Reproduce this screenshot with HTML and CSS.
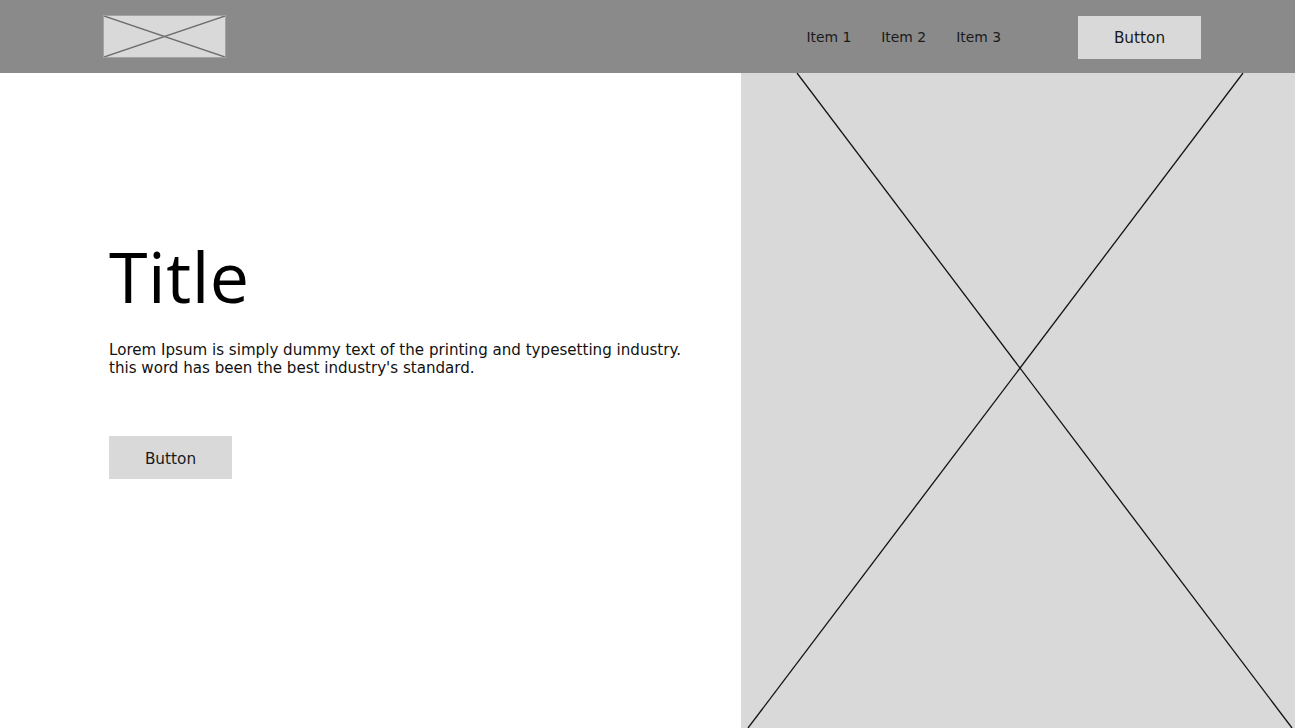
FILE: index.html
```html
<!DOCTYPE html>
<html lang="en">
<head>
<meta charset="utf-8">
<title>Landing</title>
<link rel="stylesheet" href="styles.css">
</head>
<body>
<header class="header">
  <div class="logo">
    <svg class="ph-svg" viewBox="0 0 123 43" preserveAspectRatio="none">
      <line x1="0" y1="0" x2="123" y2="43" />
      <line x1="123" y1="0" x2="0" y2="43" />
    </svg>
  </div>
  <nav class="nav">
    <a class="nav-item">Item 1</a>
    <a class="nav-item">Item 2</a>
    <a class="nav-item">Item 3</a>
  </nav>
  <button class="btn btn-header">Button</button>
</header>
<main class="main">
  <section class="hero">
    <h1 class="title">Title</h1>
    <p class="lead">Lorem Ipsum is simply dummy text of the printing and typesetting industry.<br>this word has been the best industry's standard.</p>
    <button class="btn btn-hero">Button</button>
  </section>
  <div class="media">
    <svg class="media-svg" viewBox="0 0 554 655" preserveAspectRatio="none">
      <line x1="56" y1="0" x2="551" y2="655" />
      <line x1="502" y1="0" x2="7" y2="655" />
    </svg>
  </div>
</main>
</body>
</html>
```
FILE: styles.css
```css
* { box-sizing: border-box; }
html, body { margin: 0; padding: 0; }
body {
  width: 1295px;
  height: 728px;
  overflow: hidden;
  background: #ffffff;
  font-family: "DejaVu Sans", "Open Sans", sans-serif;
  color: #111;
  display: flex;
  flex-direction: column;
}
.header {
  height: 73px;
  flex: none;
  background: #8a8a8a;
  display: flex;
  align-items: center;
  padding: 0 94px 0 103px;
}
.logo {
  width: 123px;
  height: 43px;
  background: #d9d9d9;
  border: 1px solid #a3a3a3;
}
.ph-svg { display: block; width: 100%; height: 100%; }
.ph-svg line { stroke: #6e6e6e; stroke-width: 1.5; }
.nav {
  margin-left: auto;
  display: flex;
  gap: 30px;
  margin-right: 77px;
}
.nav-item {
  font-size: 13.9px;
  color: #1a1a1a;
}
.btn {
  border: none;
  background: #d9d9d9;
  font-family: inherit;
  color: #1a1a1a;
  width: 123px;
  height: 43px;
  padding: 2px 0 0;
  font-size: 15.3px;
}
.btn-header { margin-top: 1px; }
.main {
  flex: 1;
  display: grid;
  grid-template-columns: 741px 1fr;
}
.hero {
  padding: 163px 0 0 109px;
}
.title {
  margin: 0;
  font-family: "Open Sans", sans-serif;
  font-weight: 400;
  font-size: 70px;
  line-height: 80px;
  letter-spacing: 0.5px;
  color: #000;
}
.lead {
  margin: 25px 0 0;
  font-size: 15.1px;
  line-height: 18px;
  color: #111;
}
.btn-hero {
  margin-top: 59px;
  display: block;
}
.media {
  background: #d9d9d9;
}
.media-svg { display: block; width: 100%; height: 100%; }
.media-svg line { stroke: #111; stroke-width: 1.3; }
```
